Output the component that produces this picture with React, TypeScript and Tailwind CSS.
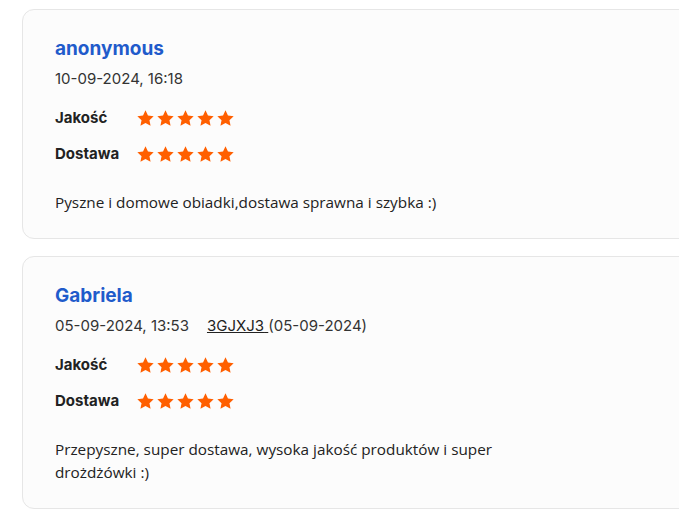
import React from "react"

interface Review {
  author: string
  date: string
  order?: { code: string; date: string }
  quality: number
  delivery: number
  text: string
}

const REVIEWS: Review[] = [
  {
    author: "anonymous",
    date: "10-09-2024, 16:18",
    quality: 5,
    delivery: 5,
    text: "Pyszne i domowe obiadki,dostawa sprawna i szybka :)",
  },
  {
    author: "Gabriela",
    date: "05-09-2024, 13:53",
    order: { code: "3GJXJ3", date: "05-09-2024" },
    quality: 5,
    delivery: 5,
    text: "Przepyszne, super dostawa, wysoka jakość produktów i super drożdżówki :)",
  },
]

function Star() {
  return (
    <svg viewBox="0 0 24 24" className="w-[19px] h-[19px] fill-[#ff5f00]">
      <path d="M12 1.6l3.1 6.6 7.2.9-5.3 5 1.4 7.2L12 17.8l-6.4 3.5L7 14.1l-5.3-5 7.2-.9z" />
    </svg>
  )
}

function Stars({ count }: { count: number }) {
  return (
    <div className="flex items-center gap-[1px]">
      {Array.from({ length: count }).map((_, i) => (
        <Star key={i} />
      ))}
    </div>
  )
}

function RatingRow({ label, value }: { label: string; value: number }) {
  return (
    <div className="flex items-center h-[36px]">
      <span className="w-[81px] text-[15px] font-bold text-[#222]">{label}</span>
      <Stars count={value} />
    </div>
  )
}

function ReviewCard({ review }: { review: Review }) {
  return (
    <div className="w-[760px] bg-[#fcfcfc] border border-[#e6e6e6] rounded-[12px] pl-[32px] pt-[27px] pb-[24px]">
      <h3 className="text-[19px] leading-[24px] font-bold text-[#1f5bcb]">{review.author}</h3>
      <div className="mt-[8px] flex items-center text-[15px] leading-[20px] text-[#333]">
        <span>{review.date}</span>
        {review.order && (
          <span className="ml-[18px]">
            <a className="underline text-[#222]">{review.order.code} </a>({review.order.date})
          </span>
        )}
      </div>
      <div className="mt-[11px]">
        <RatingRow label="Jakość" value={review.quality} />
        <RatingRow label="Dostawa" value={review.delivery} />
      </div>
      <p className="mt-[19px] max-w-[455px] text-[15.3px] leading-[23px] text-[#222] font-['Open_Sans',sans-serif]">
        {review.text}
      </p>
    </div>
  )
}

export default function App() {
  return (
    <div className="w-[679px] h-[524px] overflow-hidden bg-white pl-[22px] pt-[9px] font-['Inter',sans-serif]">
      <div className="flex flex-col gap-[17px]">
        {REVIEWS.map((r) => (
          <ReviewCard key={r.author} review={r} />
        ))}
      </div>
    </div>
  )
}
